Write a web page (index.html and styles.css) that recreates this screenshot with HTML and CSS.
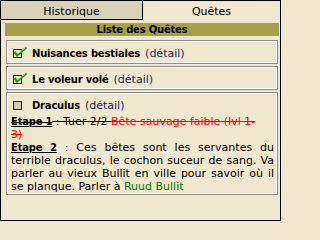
FILE: index.html
```html
<!DOCTYPE html>
<html lang="fr">
<head>
<meta charset="utf-8">
<title>Quêtes</title>
<link rel="stylesheet" href="styles.css">
</head>
<body>
<div class="widget">
  <div class="tabs">
    <div class="tab tab-off">Historique</div>
    <div class="tab tab-on">Quêtes</div>
  </div>
  <div class="panel">
    <div class="title">Liste des Quêtes</div>

    <div class="quest">
      <div class="qhead">
        <svg class="cb" width="17" height="13" viewBox="0 0 17 13"><rect x="2.5" y="2.5" width="8" height="8" fill="none" stroke="#222" stroke-width="1"/><polyline points="3.5,5 6,8.5 15.5,0.5" fill="none" stroke="#139a13" stroke-width="2.2" stroke-linejoin="miter"/><polyline points="6.5,7 14.5,0.8" fill="none" stroke="#8fe08f" stroke-width="0.8"/></svg>
        <span class="qname">Nuisances bestiales</span>
        <span class="detail">(détail)</span>
      </div>
    </div>

    <div class="quest">
      <div class="qhead">
        <svg class="cb" width="17" height="13" viewBox="0 0 17 13"><rect x="2.5" y="2.5" width="8" height="8" fill="none" stroke="#222" stroke-width="1"/><polyline points="3.5,5 6,8.5 15.5,0.5" fill="none" stroke="#139a13" stroke-width="2.2" stroke-linejoin="miter"/><polyline points="6.5,7 14.5,0.8" fill="none" stroke="#8fe08f" stroke-width="0.8"/></svg>
        <span class="qname">Le voleur volé</span>
        <span class="detail">(détail)</span>
      </div>
    </div>

    <div class="quest quest-open">
      <div class="qhead">
        <svg class="cb" width="17" height="13" viewBox="0 0 17 13"><rect x="2.5" y="2.5" width="8" height="8" fill="#d6d0bb" stroke="#333" stroke-width="1"/><rect x="3.5" y="3.5" width="6" height="6" fill="none" stroke="#c4bea8" stroke-width="1"/></svg>
        <span class="qname">Draculus</span>
        <span class="detail">(détail)</span>
      </div>
      <p class="step"><span class="step-label struck">Etape 1</span><span class="struck"> : Tuer 2/2 </span><span class="target">Bête sauvage faible (lvl 1-<br>3)</span></p>
      <p class="step step-text"><span class="step-label">Etape 2</span> : Ces bêtes sont les servantes du terrible draculus, le cochon suceur de sang. Va parler au vieux Bullit en ville pour savoir où il se planque. Parler à <span class="npc">Ruud Bullit</span></p>
    </div>
  </div>
</div>
</body>
</html>
```

FILE: styles.css
```css
body {
  margin: 0;
  background: #efe7ce;
  font-family: "DejaVu Sans", Verdana, sans-serif;
  font-size: 11px;
  color: #000;
}

.widget {
  width: 281px;
}

.tabs {
  display: flex;
}

.tab {
  box-sizing: border-box;
  height: 20px;
  border-top: 1px solid #000;
  padding-top: 4px;
  line-height: 13px;
  text-align: center;
}

.tab-off {
  width: 143px;
  background: #d8d2b8;
  border-left: 1px solid #000;
  border-right: 1px solid #000;
  border-bottom: 1px solid #000;
}

.tab-on {
  width: 138px;
  border-right: 1px solid #000;
}

.panel {
  box-sizing: border-box;
  height: 201px;
  border: 1px solid #000;
  border-top: 0;
  padding: 3px 1px 0 4px;
}

.title {
  box-sizing: border-box;
  height: 13px;
  padding-top: 1px;
  line-height: 12px;
  background: #a3a047;
  font-weight: bold;
  font-size: 10px;
  letter-spacing: -0.2px;
  text-align: center;
}

.quest {
  margin: 2px 1px 0;
  border: 1px solid #8c8c8c;
  box-shadow: inset 0 0 0 1px #ffffff;
  padding: 6px 3px 3px 4px;
}

.title + .quest {
  margin-top: 4px;
}

.quest-open {
  padding-bottom: 1px;
}

.qhead {
  display: flex;
  align-items: center;
  height: 13px;
  line-height: 13px;
}

.cb {
  display: block;
  flex: none;
  margin-right: 4px;
  overflow: visible;
}

.qname {
  font-weight: bold;
  font-size: 10px;
  letter-spacing: -0.2px;
}

.detail {
  margin-left: 5px;
  color: #0a2f63;
}

.step {
  margin: 0;
  line-height: 13px;
  text-align: justify;
}

.qhead + .step {
  margin-top: 3px;
}

.step-label {
  font-weight: bold;
  font-size: 10px;
  letter-spacing: -0.2px;
  text-decoration: underline;
}

.step-label.struck {
  text-decoration: underline line-through;
}

.struck {
  text-decoration: line-through;
}

.target {
  color: #ff0000;
  text-decoration: line-through;
}

.npc {
  color: #008000;
}
```
